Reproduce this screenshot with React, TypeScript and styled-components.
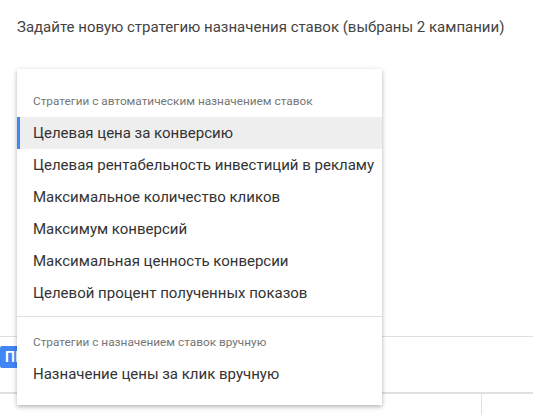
import React from "react";
import styled, { createGlobalStyle } from "styled-components";

const Global = createGlobalStyle`
  html, body { margin: 0; padding: 0; background: #fff; }
  body { font-family: Roboto, "Noto Sans", Arial, sans-serif; overflow: hidden; }
`;

const Page = styled.div`
  position: relative;
  width: 533px;
  height: 415px;
  overflow: hidden;
  background: #fff;
`;

const Title = styled.div`
  padding: 17px 0 0 17px;
  font-size: 15px;
  line-height: 20px;
  color: #444;
  height: 337px;
  box-sizing: border-box;
  border-bottom: 1px solid #e0e0e0;
`;

const Toolbar = styled.div`
  display: flex;
  align-items: flex-start;
  height: 57px;
  padding-top: 9px;
  box-sizing: border-box;
  border-bottom: 2px solid #e0e0e0;
`;

const PrimaryButton = styled.button`
  height: 22px;
  border: none;
  border-radius: 2px;
  background: #4285f4;
  color: #fff;
  font-family: Roboto, Arial, sans-serif;
  font-weight: 700;
  font-size: 14px;
  padding: 0 16px 0 5px;
  margin: 0;
`;

const TableHead = styled.div`
  display: grid;
  grid-template-columns: 482px 1fr;
  height: 30px;
`;

const Cell = styled.div<{ $divider?: boolean }>`
  border-right: ${(p) => (p.$divider ? "1px solid #e0e0e0" : "none")};
`;

const Menu = styled.div`
  position: absolute;
  top: 69px;
  left: 17px;
  width: 365px;
  background: #fff;
  padding: 16px 0 15px;
  box-shadow: 0 2px 4px rgba(0, 0, 0, 0.2), 0 1px 6px rgba(0, 0, 0, 0.12);
  box-sizing: border-box;
`;

const Group = styled.div<{ $divider?: boolean }>`
  padding-bottom: ${(p) => (p.$divider ? "7px" : "0")};
  border-bottom: ${(p) => (p.$divider ? "1px solid #e0e0e0" : "none")};
  & + & {
    padding-top: 9px;
  }
`;

const GroupHeader = styled.div`
  height: 32px;
  display: flex;
  align-items: center;
  padding-left: 16px;
  font-size: 11.8px;
  color: #757575;
`;

const Item = styled.div<{ $active?: boolean }>`
  height: 32px;
  display: flex;
  align-items: center;
  padding-left: 16px;
  font-size: 15px;
  color: #333;
  background: ${(p) => (p.$active ? "#eeeeee" : "transparent")};
  box-shadow: ${(p) => (p.$active ? "inset 3px 0 0 #4285f4" : "none")};
`;

const groups = [
  {
    title: "Стратегии с автоматическим назначением ставок",
    items: [
      "Целевая цена за конверсию",
      "Целевая рентабельность инвестиций в рекламу",
      "Максимальное количество кликов",
      "Максимум конверсий",
      "Максимальная ценность конверсии",
      "Целевой процент полученных показов",
    ],
  },
  {
    title: "Стратегии с назначением ставок вручную",
    items: ["Назначение цены за клик вручную"],
  },
];

export default function App() {
  return (
    <Page>
      <Global />
      <Title>Задайте новую стратегию назначения ставок (выбраны 2 кампании)</Title>
      <Toolbar>
        <PrimaryButton>ПРИМЕНИТЬ</PrimaryButton>
      </Toolbar>
      <TableHead>
        <Cell $divider />
        <Cell />
      </TableHead>
      <Menu>
        {groups.map((g, gi) => (
          <Group key={g.title} $divider={gi === 0}>
            <GroupHeader>{g.title}</GroupHeader>
            {g.items.map((it, ii) => (
              <Item key={it} $active={gi === 0 && ii === 0}>
                {it}
              </Item>
            ))}
          </Group>
        ))}
      </Menu>
    </Page>
  );
}
